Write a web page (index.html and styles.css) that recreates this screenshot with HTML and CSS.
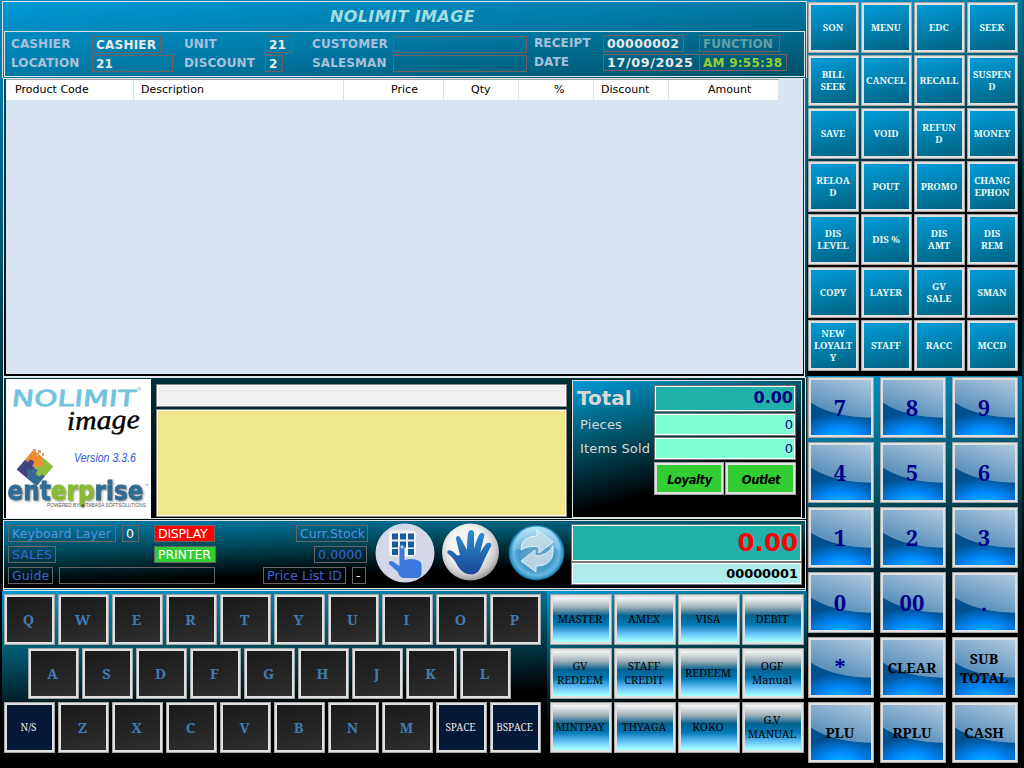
FILE: index.html
```html
<!DOCTYPE html>
<html lang="en">
<head>
<meta charset="utf-8">
<title>NOLIMIT IMAGE</title>
<link rel="stylesheet" href="styles.css">
</head>
<body>
<div class="app">
  <main class="left">
    <header class="header">
      <h1 class="title">NOLIMIT IMAGE</h1>
      <div class="info">
        <label>CASHIER</label><span class="box w69">CASHIER</span>
        <label>UNIT</label><span class="box w27">21</span>
        <label>CUSTOMER</label><span class="box w134"></span>
        <label class="up">RECEIPT</label><span class="box up w81">00000002</span><span class="box up func">FUNCTION</span>
        <label>LOCATION</label><span class="box w81">21</span>
        <label>DISCOUNT</label><span class="box w18">2</span>
        <label>SALESMAN</label><span class="box w134"></span>
        <label class="up">DATE</label><span class="box up w97">17/09/2025</span><span class="box up time">AM 9:55:38</span>
      </div>
    </header>
    <section class="items">
      <div class="thead"><span>Product Code</span><span>Description</span><span>Price</span><span>Qty</span><span>%</span><span>Discount</span><span>Amount</span></div>
    </section>
    <section class="middle">
      <svg class="logo" width="145" height="139" viewBox="6 379 145 139">
        <text class="nolimit" transform="translate(11 405.500) skewX(-6)" textLength="124" lengthAdjust="spacingAndGlyphs">NOLIMIT</text>
        <text class="reg" x="136" y="391">®</text>
        <text class="script" x="67" y="430" textLength="73" lengthAdjust="spacingAndGlyphs" transform="rotate(-1.500 67 430)">image</text>
        <text class="version" x="74" y="462" textLength="62" lengthAdjust="spacingAndGlyphs">Version 3.3.6</text>
        <g transform="translate(35 468) rotate(40)">
          <path fill="#ef8a33" d="M-13-13H0V0H-13z"/>
          <path fill="#8dbd3b" d="M0-13H13V0H0z"/>
          <path fill="#42437f" d="M-13 0H0V13H-13z"/>
          <path fill="#36698f" d="M0 0H13V13H0z"/>
          <circle cx="1.500" cy="-6.500" r="2.800" fill="#ef8a33"/>
          <circle cx="6.500" cy="1.500" r="2.800" fill="#8dbd3b"/>
          <circle cx="-6.500" cy="-1.500" r="2.800" fill="#42437f"/>
          <circle cx="-1.500" cy="6.500" r="2.800" fill="#36698f"/>
        </g>
        <path d="M33 449h3v3h-3zM38 450h3v3h-3zM42 453h2v3h-2zM36 453h3v3h-3z" fill="#e69b68"/>
        <text class="enterprise" x="7.500" y="500" textLength="136" lengthAdjust="spacingAndGlyphs">ent<tspan class="lime">erp</tspan>rise</text>
        <text class="tm" x="144.500" y="488">™</text>
        <text class="powered" x="47" y="507" textLength="99" lengthAdjust="spacingAndGlyphs">POWERED BY ◆ TABASA SOFTSOLUTIONS</text>
      </svg>
      <div class="entry"><div class="line"></div><div class="memo"></div></div>
      <div class="totals">
        <b class="lt">Total</b><span class="field grand">0.00</span>
        <span>Pieces</span><span class="field">0</span>
        <span>Items Sold</span><span class="field">0</span>
        <div class="pair"><button>Loyalty</button><button>Outlet</button></div>
      </div>
    </section>
    <section class="status">
      <div class="flags">
        <div><span class="tag" style="width:108px">Keyboard Layer</span><span class="tag wh" style="width:17px;margin-left:6px">0</span><span class="tag red" style="width:61px;margin-left:15px">DISPLAY</span><span class="tag end" style="width:72px">Curr.Stock</span></div>
        <div><span class="tag dk" style="width:48px">SALES</span><span class="tag green" style="width:62px;margin-left:98px">PRINTER</span><span class="tag dk end" style="width:53px;margin-right:1px">0.0000</span></div>
        <div><span class="tag dk" style="width:45px">Guide</span><span class="tag" style="width:156px;margin-left:6px"></span><span class="tag dk end" style="width:83px">Price List ID</span><span class="tag wh" style="width:14px;margin:0 2px 0 6px">-</span></div>
      </div>
      <svg class="icons" width="203" height="64" viewBox="368 521 203 64">
        <defs>
          <radialGradient id="ball" cx=".45" cy=".4" r=".6"><stop offset=".55" stop-color="#f4f4f4"/><stop offset=".85" stop-color="#c8c8c8"/><stop offset="1" stop-color="#999"/></radialGradient>
          <radialGradient id="aqua" cx=".5" cy=".5" r=".5"><stop offset="0" stop-color="#6da6c9"/><stop offset=".65" stop-color="#4698c5"/><stop offset=".82" stop-color="#66b9e2"/><stop offset=".94" stop-color="#2e93c4"/><stop offset="1" stop-color="#0a5277"/></radialGradient>
          <linearGradient id="palm" x2="0" y2="1"><stop offset="0" stop-color="#2b8fd3"/><stop offset="1" stop-color="#1b4793"/></linearGradient>
          <linearGradient id="shine" x2="0" y2="1"><stop offset="0" stop-color="#c4ebff" stop-opacity=".9"/><stop offset="1" stop-color="#a6d8ef" stop-opacity=".3"/></linearGradient>
        </defs>
        <circle cx="405" cy="553" r="29.500" fill="#d3d7e7"/>
        <rect x="389" y="530.500" width="27" height="26" rx="4" fill="#f5f5f2"/>
        <path fill="#175b9c" d="M392 533.500h6v6h-6zM400 533.500h6v6h-6zM408 533.500h6v6h-6zM392 541.500h6v6h-6zM400 541.500h6v6h-6zM408 541.500h6v6h-6zM392 549h6v6h-6zM408 549h6v6h-6z"/>
        <path fill="#3a78dc" d="M399.500 547a2.500 2.500 0 0 1 5 0v13.500q3-2 6-1.500 5 0 9 2 2 1 2 4v8q0 5-5 5H403q-4-1-5-6l-9-8q-1-3 3-3l7.500 5z"/>
        <circle cx="402" cy="547" r="1.500" fill="#b9d4f6"/>
        <circle cx="470.500" cy="552" r="28.500" fill="url(#ball)"/>
        <path fill="url(#palm)" d="M460 555Q458 547 456 539q0-3 2-3t3 3l6 11q0-9 1-17 1-3 3-3 3 0 3 3v16q2-8 5-14 2-3 4-2 2 1 1 4l-4 16q4-7 7-10 3-1 4 1 1 1-1 4l-5 10q-2 5-4 9-3 7-9 7.500-9 0-14-8-4-8-9-12-3-2-1-4 4-1 9 5z"/>
        <circle cx="536.500" cy="552.500" r="28" fill="url(#aqua)"/>
        <path fill="url(#shine)" d="M512 551a24.500 24.500 0 0 1 49 0q-12-6-28-4-13 1-21 4z"/>
        <g fill="#c3dbe8" stroke="#e9f7ff" stroke-width="1" opacity=".9">
          <path d="M521 550Q521 536 537 536v-6l16 12-14 11v-6q-10-2-18 3z"/>
          <path d="M553 546q2 20-17 20v6l-15-11 14-11v6q12 0 18-10z"/>
        </g>
      </svg>
      <div class="due"><div class="amount">0.00</div><div class="serial">00000001</div></div>
    </section>
    <section class="keys">
      <div class="kb">
        <div class="row"><button>Q</button><button>W</button><button>E</button><button>R</button><button>T</button><button>Y</button><button>U</button><button>I</button><button>O</button><button>P</button></div>
        <div class="row indent"><button>A</button><button>S</button><button>D</button><button>F</button><button>G</button><button>H</button><button>J</button><button>K</button><button>L</button></div>
        <div class="row"><button class="navy">N/S</button><button>Z</button><button>X</button><button>C</button><button>V</button><button>B</button><button>N</button><button>M</button><button class="navy">SPACE</button><button class="navy">BSPACE</button></div>
      </div>
      <div class="pay">
        <button>MASTER</button><button>AMEX</button><button>VISA</button><button>DEBIT</button>
        <button>GV<br>REDEEM</button><button>STAFF<br>CREDIT</button><button>REDEEM</button><button>OGF<br>Manual</button>
        <button>MINTPAY</button><button>THYAGA</button><button>KOKO</button><button>G.V<br>MANUAL</button>
      </div>
    </section>
  </main>
  <aside class="right">
    <div class="fn">
      <button>SON</button><button>MENU</button><button>EDC</button><button>SEEK</button>
      <button>BILL<br>SEEK</button><button>CANCEL</button><button>RECALL</button><button>SUSPEN<br>D</button>
      <button>SAVE</button><button>VOID</button><button>REFUN<br>D</button><button>MONEY</button>
      <button>RELOA<br>D</button><button>POUT</button><button>PROMO</button><button>CHANG<br>EPHON</button>
      <button>DIS<br>LEVEL</button><button>DIS %</button><button>DIS<br>AMT</button><button>DIS<br>REM</button>
      <button>COPY</button><button>LAYER</button><button>GV<br>SALE</button><button>SMAN</button>
      <button>NEW<br>LOYALT<br>Y</button><button>STAFF</button><button>RACC</button><button>MCCD</button>
    </div>
    <div class="num">
      <button><b>7</b></button><button><b>8</b></button><button><b>9</b></button>
      <button><b>4</b></button><button><b>5</b></button><button><b>6</b></button>
      <button><b>1</b></button><button><b>2</b></button><button><b>3</b></button>
      <button><b>0</b></button><button><b>00</b></button><button><b>.</b></button>
      <button><b>*</b></button><button class="word"><b>CLEAR</b></button><button class="word"><b>SUB<br>TOTAL</b></button>
      <button class="word"><b>PLU</b></button><button class="word"><b>RPLU</b></button><button class="word"><b>CASH</b></button>
    </div>
  </aside>
</div>
</body>
</html>
```
FILE: styles.css
```css
* { box-sizing: border-box; }
body { margin: 0; background: #000; font-family: "DejaVu Sans", sans-serif; }
.app { width: 1024px; height: 768px; display: grid; grid-template-columns: 807px 215px; overflow: hidden;
  background: linear-gradient(#006580, #00566b 10%, #001a20 40%, #003a48 50%, #000 75%); }
button { margin: 0; padding: 0 2px 0 0; border: 1px solid #a5a5a5; box-shadow: inset 0 0 0 2px #e0e0e0; border-radius: 0;
  font-family: "Noto Serif", "DejaVu Serif Condensed", "DejaVu Serif", serif; font-stretch: condensed; }
.left { display: grid; grid-template-rows: 78px 299px 142px 72px 177px; padding-left: 2px; background: linear-gradient(#0087bb, #00566b 34%, #001011 67%, #000 80%); }

.header { margin-top: 1px; border: 1px solid #d8e4e8; border-bottom: 0; padding: 0 1px 0 1px; background: linear-gradient(to bottom right, #0099d4, #0079a5 50%, #005064); }
.title { margin: 0; height: 29px; text-align: center; font: italic bold 16px/29px "DejaVu Sans", sans-serif; letter-spacing: .4px; padding-right: 4px; color: #a5dce2; }
.info { height: 46px; border: 1px solid #d8e4e8; padding: 4px 0 0 6px; display: grid; grid-template-rows: 19px 19px; align-items: start;
  grid-template-columns: 81px 92px 81px 47px 81px 141px 69px 96px 88px; font-weight: bold; font-size: 12px; line-height: 16px; color: #a9c0dd; letter-spacing: .12px; }
.info .up { margin-top: -1px; }
.box { height: 17px; border: 1px solid #745f61; padding-left: 3px; color: #e8e8e8; white-space: nowrap; letter-spacing: .22px; }
.w69 { width: 69px; } .w27 { width: 27px; } .w134 { width: 134px; } .w81 { width: 81px; } .w18 { width: 18px; } .w97 { width: 97px; font-size: 12.800px; letter-spacing: .6px; }
.box.up.w81 { font-size: 12.500px; letter-spacing: .35px; }
.func { width: 81px; color: #62a0a5; letter-spacing: 0; }
.time { width: 88px; color: #9acd32; letter-spacing: .25px; }

.items { margin: 0 2px 0 1px; border: 1px solid #e0e8ec; padding: 0 1px 1px 2px; display: flex; flex-direction: column; background: linear-gradient(#004d60, #000); }
.items::after { content: ""; flex: 1; background: #d8e4f1; margin-bottom: 1px; }
.thead { display: grid; grid-template-columns: 128px 210px 100px 75px 75px 75px 110px; height: 21px; background: #d8e4f1; font-size: 11px; }
.thead span { background: #fff; border: solid #a5a5a5; border-width: 1px 0; padding-left: 9px; line-height: 20px; box-shadow: inset -1px 0 #e2e2e2; letter-spacing: .02px; }
.thead span:nth-child(2) { padding-left: 7px; }
.thead span:nth-child(3) { padding-left: 47px; }
.thead span:nth-child(4) { padding-left: 27px; }
.thead span:nth-child(5) { padding-left: 35px; }
.thead span:nth-child(6) { padding-left: 7px; }
.thead span:nth-child(7) { padding-left: 39px; }

.middle { margin: 0 1px 0 1px; border: 1px solid #e0e8ec; padding: 1px; display: flex; background: linear-gradient(#00313a, #000); }
.logo { display: block; background: #fff; margin-left: 1px; flex: none; }
.nolimit { font: 22px "DejaVu Sans", sans-serif; fill: #70c4de; stroke: #70c4de; stroke-width: .8px; }
.reg { font: 6px "DejaVu Sans", sans-serif; fill: #70c4de; }
.script { font: italic 27px "Liberation Serif", serif; fill: #000; stroke: #000; stroke-width: .4px; }
.version { font: italic 12.500px "Liberation Sans", sans-serif; fill: #3457dc; }
.enterprise { font: bold 26px "DejaVu Sans", sans-serif; fill: #336b91; stroke: #336b91; stroke-width: .8px; filter: drop-shadow(1px 1px 1px #999); }
.lime { fill: #8aba32; stroke: #8aba32; }
.tm { font: 5px "DejaVu Sans", sans-serif; fill: #336b91; }
.powered { font: 5px "Liberation Sans", sans-serif; fill: #555; }
.entry { width: 411px; margin: 5px 5px 0; display: grid; grid-template-rows: 23px 108px; row-gap: 2px; }
.line { background: #f0f0f0; border: 1px solid #888; box-shadow: inset 0 0 0 1px #fff; }
.memo { background: #f0e68c; border: 1px solid #888; box-shadow: inset 0 0 0 1px #fff; }
.totals { width: 230px; height: 138px; margin-top: 1px; border: 1px solid #e0e0e0; padding: 4px 0 0 4px; display: grid; grid-template-columns: 77px 142px; grid-template-rows: 28px 24px 25px 34px; color: #d8d8d8; font-size: 13px;
  background: linear-gradient(165deg, #0099d4, #00566b 32%, #000 68%); }
.totals > span:not(.field) { padding-left: 3px; white-space: nowrap; line-height: 24px; letter-spacing: .15px; }
.lt { font-size: 20px; line-height: 27px; }
.field { height: 23px; background: #7fffd4; border: 1px solid #777; box-shadow: inset 0 0 0 1px #fff; color: #000080; text-align: right; padding-right: 2px; font-size: 13px; line-height: 22px; }
.grand { height: 27px; background: #20b2aa; font-weight: bold; font-size: 16px; line-height: 24px; }
.pair { grid-column: 2; display: grid; grid-template-columns: 70px 71px; column-gap: 1px; height: 33px; }
.pair button { background: #32cd32; font: italic bold 11.500px "DejaVu Sans", sans-serif; letter-spacing: -.4px; padding: 2px 0 0 1px; }

.status { margin: 1px 1px 0 1px; padding: 4px 1px 1px 4px; border: solid #e0e0e0; border-width: 1px 1px 3px; border-bottom-style: double; display: grid; grid-template-columns: 360px 203px 231px; background: linear-gradient(178deg, #0080ae, #004d60 32%, #000 68%); }
.flags { width: 360px; display: grid; grid-template-rows: 21px 21px 21px; font-size: 12.500px; }
.flags > div { display: flex; align-items: flex-start; }
.tag { height: 17px; border: 1px solid #666; line-height: 16px; padding-left: 3px; white-space: nowrap; color: #5a8fe0; letter-spacing: .1px; }
.dk { color: #4064d0; } .wh { color: #fff; } .end { margin-left: auto; }
.red { color: #fff; background: #f00; letter-spacing: -.25px; } .green { color: #fff; background: #32cd32; letter-spacing: -.1px; }
.icons { margin-top: -4px; }
.due { margin-top: -1px; text-align: right; color: #000; }
.amount { height: 38px; background: #20b2aa; border: 1px solid #777; box-shadow: inset 0 0 0 1px #fff; color: #f00; font: bold 24.500px/36px "DejaVu Sans", sans-serif; padding-right: 3px; }
.serial { height: 23px; background: #afeeee; border: 1px solid #777; box-shadow: inset 0 0 0 1px #fff; font: bold 12.900px/22px "DejaVu Sans", sans-serif; padding-right: 3px; }

.keys { display: grid; grid-template-columns: 545px 260px; }
.kb { padding: 3px 0 0 2px; display: flex; flex-direction: column; gap: 3px; background: linear-gradient(176deg, #0099d4, #00566b 30%, #000 64%); }
.row { display: flex; gap: 3px; }
.indent { margin-left: 24px; }
.kb button { width: 51px; height: 51px; padding-bottom: 1px; background: linear-gradient(165deg, #181818, #303030); color: #427bb4; font-size: 14.500px; font-weight: bold; }
.kb .navy { background: #041838; color: #e6e6e6; font-size: 10px; font-weight: 400; }
.pay { padding: 3px 0 0 3px; display: grid; grid-template-columns: repeat(4, 62px); grid-template-rows: repeat(3, 51px); gap: 3px 2px; background: linear-gradient(172deg, #0099d4, #00566b 28%, #000 62%); }
.pay button { color: #000; padding: 0 2px 1px 0; font-size: 11px; line-height: 14px; background: linear-gradient(#f2f3f3 6%, #9faeb6 25%, #05618e 42%, #0078b5 60%, #62bdf5 78%, #a2ffff 94%); }

.right { display: grid; grid-template-rows: 376px 392px; }
.fn { padding: 2px 0 0 1px; display: grid; grid-template-columns: repeat(4, 51px); grid-template-rows: repeat(7, 51px); gap: 2px; background: linear-gradient(165deg, #0099d4, #00566b 28%, #000 58%); }
.fn button { padding-right: 1px; background: linear-gradient(165deg, #0099d4 10%, #005f7c); color: #eafaf5; font-weight: bold; font-size: 9.500px; line-height: 12px; white-space: nowrap; }
.num { padding: 1px 0 0 1px; display: grid; grid-template-columns: repeat(3, 66px); grid-template-rows: repeat(6, 61px); gap: 4px 6px; background: linear-gradient(165deg, #0099d4, #00566b 28%, #000 65%); }
.num button { background: radial-gradient(ellipse 46px 24px at 50% 100%, #00b2ff, #008aff 40%, transparent), #00508f; color: #00008b; font-size: 22px; display: grid; place-items: center; }
.num button::before { content: ""; grid-area: 1/1; width: 60px; height: 55px; margin-left: 2px; background: linear-gradient(200deg, #b0c9df, #5a90bb 60%, #2f70a8);
  -webkit-mask-image: radial-gradient(ellipse 76px 38px at 60px 0, #000 98%, transparent); mask-image: radial-gradient(ellipse 76px 38px at 60px 0, #000 98%, transparent); }
.num b { grid-area: 1/1; position: relative; padding-bottom: 2px; }
.num .word { color: #000; font-size: 14.200px; line-height: 19px; }
.num .word b { padding-bottom: 0; }
```
